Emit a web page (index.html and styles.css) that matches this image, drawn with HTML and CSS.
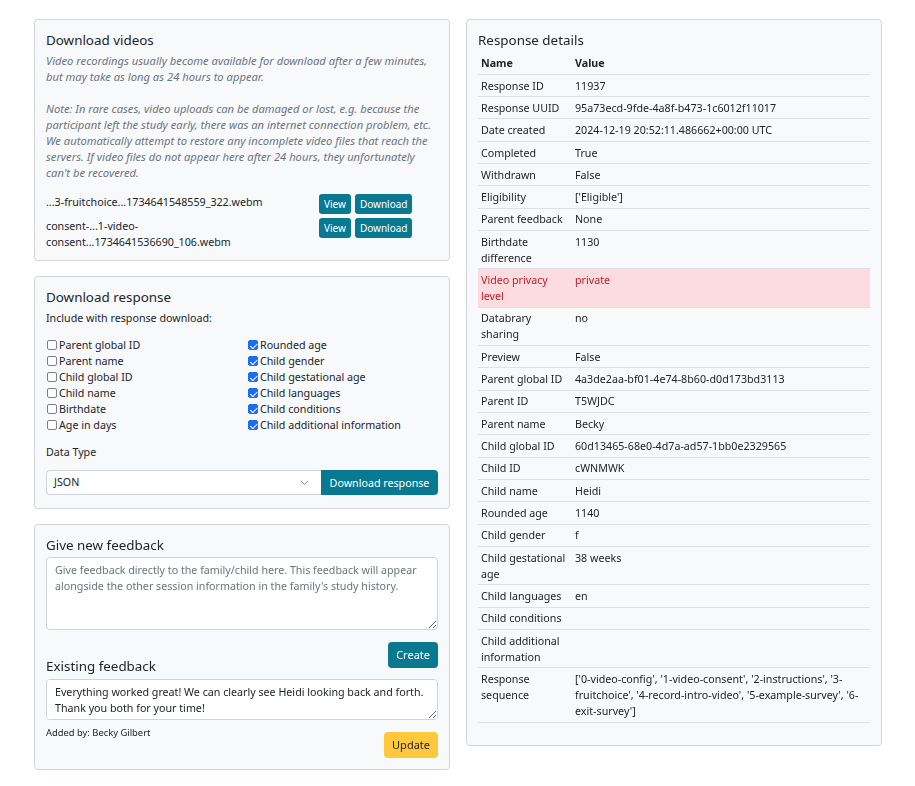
FILE: index.html
```html
<!DOCTYPE html>
<html lang="en">
<head>
<meta charset="utf-8">
<title>Response</title>
<link rel="stylesheet" href="styles.css">
</head>
<body>
<div class="page">
  <div class="col">
    <section class="card">
      <h2 class="card-title">Download videos</h2>
      <p class="muted-note">Video recordings usually become available for download after a few minutes, but may take as long as 24 hours to appear.<br><br>Note: In rare cases, video uploads can be damaged or lost, e.g. because the participant left the study early, there was an internet connection problem, etc. We automatically attempt to restore any incomplete video files that reach the servers. If video files do not appear here after 24 hours, they unfortunately can't be recovered.</p>
      <div class="video-list">
        <div class="video-row">
          <div class="video-name">...3-fruitchoice...1734641548559_322.webm</div>
          <div class="video-actions">
            <button class="btn btn-teal btn-xs">View</button>
            <button class="btn btn-teal btn-xs">Download</button>
          </div>
        </div>
        <div class="video-row">
          <div class="video-name">consent-...1-video-consent...1734641536690_106.webm</div>
          <div class="video-actions">
            <button class="btn btn-teal btn-xs">View</button>
            <button class="btn btn-teal btn-xs">Download</button>
          </div>
        </div>
      </div>
    </section>

    <section class="card">
      <h2 class="card-title">Download response</h2>
      <div class="label-line">Include with response download:</div>
      <div class="check-grid">
        <div class="check-col">
          <label class="check"><span class="box"></span>Parent global ID</label>
          <label class="check"><span class="box"></span>Parent name</label>
          <label class="check"><span class="box"></span>Child global ID</label>
          <label class="check"><span class="box"></span>Child name</label>
          <label class="check"><span class="box"></span>Birthdate</label>
          <label class="check"><span class="box"></span>Age in days</label>
        </div>
        <div class="check-col">
          <label class="check"><span class="box on"></span>Rounded age</label>
          <label class="check"><span class="box on"></span>Child gender</label>
          <label class="check"><span class="box on"></span>Child gestational age</label>
          <label class="check"><span class="box on"></span>Child languages</label>
          <label class="check"><span class="box on"></span>Child conditions</label>
          <label class="check"><span class="box on"></span>Child additional information</label>
        </div>
      </div>
      <div class="data-type">Data Type</div>
      <div class="input-group">
        <div class="select">JSON
          <svg class="chev" width="9" height="6" viewBox="0 0 9 6"><path d="M1 1l3.5 3.5L8 1" fill="none" stroke="#8a9096" stroke-width="1"/></svg>
        </div>
        <button class="btn btn-teal btn-group-end">Download response</button>
      </div>
    </section>

    <section class="card card-feedback">
      <h2 class="card-title">Give new feedback</h2>
      <textarea class="textarea tall" placeholder="Give feedback directly to the family/child here. This feedback will appear alongside the other session information in the family's study history."></textarea>
      <div class="feedback-head">
        <h2 class="card-title existing">Existing feedback</h2>
        <button class="btn btn-teal btn-md">Create</button>
      </div>
      <textarea class="textarea short">Everything worked great! We can clearly see Heidi looking back and forth. Thank you both for your time!</textarea>
      <div class="feedback-foot">
        <div class="added-by">Added by: Becky Gilbert</div>
        <button class="btn btn-yellow btn-md">Update</button>
      </div>
    </section>
  </div>

  <div class="col">
    <section class="card">
      <h2 class="card-title">Response details</h2>
      <table class="details">
        <thead>
          <tr><th class="name-col">Name</th><th>Value</th></tr>
        </thead>
        <tbody>
          <tr><td>Response ID</td><td>11937</td></tr>
          <tr><td>Response UUID</td><td>95a73ecd-9fde-4a8f-b473-1c6012f11017</td></tr>
          <tr><td>Date created</td><td>2024-12-19 20:52:11.486662+00:00 UTC</td></tr>
          <tr><td>Completed</td><td>True</td></tr>
          <tr><td>Withdrawn</td><td>False</td></tr>
          <tr><td>Eligibility</td><td>['Eligible']</td></tr>
          <tr><td>Parent feedback</td><td>None</td></tr>
          <tr><td>Birthdate difference</td><td>1130</td></tr>
          <tr class="danger"><td>Video privacy level</td><td>private</td></tr>
          <tr><td>Databrary sharing</td><td>no</td></tr>
          <tr><td>Preview</td><td>False</td></tr>
          <tr><td>Parent global ID</td><td>4a3de2aa-bf01-4e74-8b60-d0d173bd3113</td></tr>
          <tr><td>Parent ID</td><td>T5WJDC</td></tr>
          <tr><td>Parent name</td><td>Becky</td></tr>
          <tr><td>Child global ID</td><td>60d13465-68e0-4d7a-ad57-1bb0e2329565</td></tr>
          <tr><td>Child ID</td><td>cWNMWK</td></tr>
          <tr><td>Child name</td><td>Heidi</td></tr>
          <tr><td>Rounded age</td><td>1140</td></tr>
          <tr><td>Child gender</td><td>f</td></tr>
          <tr><td>Child gestational age</td><td>38 weeks</td></tr>
          <tr><td>Child languages</td><td>en</td></tr>
          <tr><td>Child conditions</td><td></td></tr>
          <tr><td>Child additional information</td><td></td></tr>
          <tr><td>Response sequence</td><td>['0-video-config', '1-video-consent', '2-instructions', '3-fruitchoice', '4-record-intro-video', '5-example-survey', '6-exit-survey']</td></tr>
        </tbody>
      </table>
    </section>
  </div>
</div>
</body>
</html>
```

FILE: styles.css
```css
* { box-sizing: border-box; }

body {
  margin: 0;
  background: #fff;
  color: #212529;
  font-family: "Noto Sans", "Open Sans", sans-serif;
  font-size: 10.7px;
  line-height: 16px;
}

.page {
  display: grid;
  grid-template-columns: 416px 416px;
  column-gap: 16px;
  padding: 19px 33px 0 34px;
  align-items: start;
}

.col {
  display: flex;
  flex-direction: column;
  gap: 15px;
}

.card {
  background: #f8f9fa;
  border: 1px solid #d3d6d9;
  border-radius: 4px;
  padding: 10px 11px;
}

.card-feedback {
  padding-bottom: 11px;
}

.card-title {
  margin: 0 0 2px;
  font-size: 13.4px;
  line-height: 20px;
  font-weight: 400;
  color: #212529;
}

.muted-note {
  margin: 0;
  padding-top: 1px;
  font-style: italic;
  font-size: 11.2px;
  color: #6c757d;
}

.video-list {
  margin-top: 13px;
  display: flex;
  flex-direction: column;
  gap: 4px;
}

.video-row {
  display: flex;
  align-items: flex-start;
}

.video-name {
  width: 273px;
  padding-right: 6px;
}

.video-actions {
  display: flex;
  gap: 4px;
}

.btn {
  border: 0;
  border-radius: 3px;
  font-family: inherit;
  cursor: pointer;
}

.btn-teal { background: #087990; color: #fff; }
.btn-yellow { background: #ffc83d; color: #212529; }

.btn-xs {
  font-size: 10px;
  line-height: 14px;
  padding: 3px 5px;
  height: 20px;
}

.btn-md {
  font-size: 11px;
  line-height: 16px;
  height: 26px;
  padding: 5px 8px;
  border-radius: 4px;
}

.label-line {
  padding-top: 1px;
}

.check-grid {
  margin-top: 11px;
  display: grid;
  grid-template-columns: 201px 1fr;
}

.check-col {
  display: flex;
  flex-direction: column;
}

.check {
  display: flex;
  align-items: center;
  gap: 2px;
  height: 16px;
}

.box {
  width: 10px;
  height: 10px;
  margin-left: 1px;
  border: 1px solid #7d8287;
  border-radius: 2px;
  background: #fff;
  position: relative;
}

.box.on {
  background: #1b6ef3;
  border-color: #1b6ef3;
}

.box.on::after {
  content: "";
  position: absolute;
  left: 2.5px;
  top: 0.5px;
  width: 3px;
  height: 5.5px;
  border: solid #fff;
  border-width: 0 1.5px 1.5px 0;
  transform: rotate(45deg);
}

.data-type {
  margin-top: 11px;
}

.input-group {
  margin-top: 10px;
  margin-bottom: 3px;
  display: flex;
  height: 25px;
}

.select {
  width: 275px;
  background: #fff;
  border: 1px solid #ced4da;
  border-right: 0;
  border-radius: 4px 0 0 4px;
  padding: 0 7px;
  display: flex;
  align-items: center;
  justify-content: space-between;
  line-height: 23px;
}

.chev { margin-right: 5px; }

.btn-group-end {
  flex: 1;
  font-size: 10.7px;
  border-radius: 0 4px 4px 0;
  padding: 0 6px;
}

.textarea {
  display: block;
  width: 100%;
  margin: 0;
  font-family: inherit;
  font-size: 10.7px;
  line-height: 16px;
  color: #212529;
  background: #fff;
  border: 1px solid #ced4da;
  border-radius: 4px;
  padding: 4px 8px;
  resize: vertical;
}

.textarea::placeholder { color: #6c757d; }

.textarea.tall { height: 73px; }
.textarea.short { height: 41px; margin-top: 3px; }

.feedback-head {
  margin-top: 12px;
  display: flex;
  justify-content: space-between;
  align-items: flex-start;
}

.card-title.existing {
  margin: 14px 0 0;
}

.feedback-foot {
  margin-top: 6px;
  display: flex;
  justify-content: space-between;
  align-items: flex-start;
}

.added-by {
  font-size: 9.4px;
  line-height: 14px;
}

.feedback-foot .btn { margin-top: 6px; }

.details {
  width: 100%;
  border-collapse: collapse;
  margin-bottom: 12px;
  margin-top: 2.5px;
}

.details th,
.details td {
  text-align: left;
  vertical-align: top;
  padding: 2.7px 3px 2.65px;
  border-bottom: 1px solid #dee2e6;
}

.details th {
  font-weight: 700;
}

.details .name-col {
  width: 94px;
}

.details tr.danger td {
  background: #fcdcdf;
  color: #b8222c;
}
```
